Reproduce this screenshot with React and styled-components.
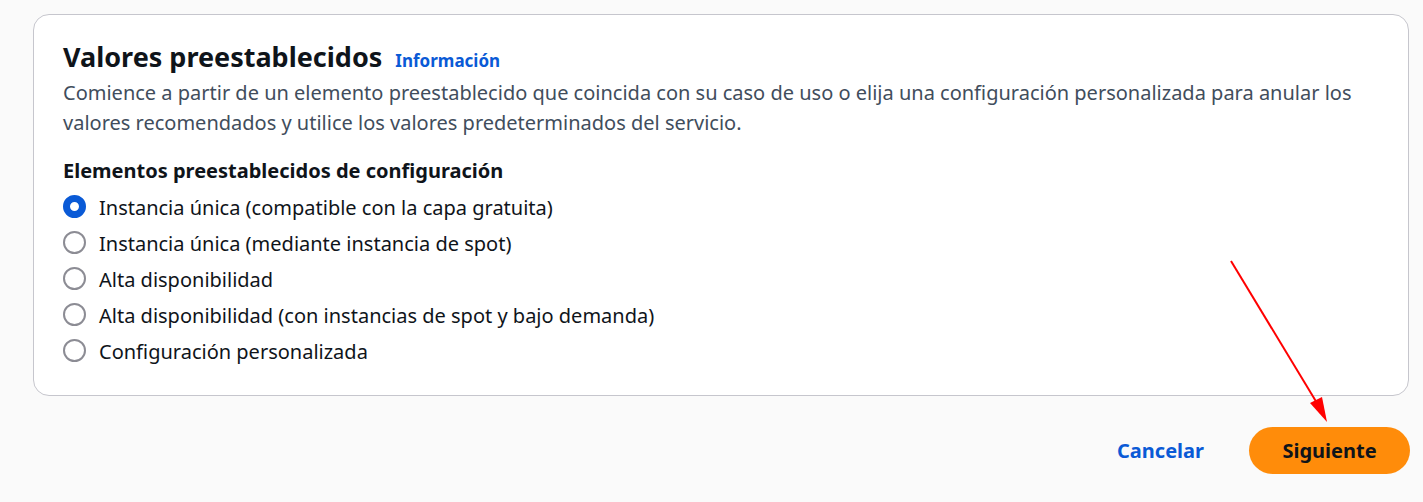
import React, { useState } from 'react';
import styled, { createGlobalStyle } from 'styled-components';

const GlobalStyle = createGlobalStyle`
  html, body {
    margin: 0;
    padding: 0;
    background: #fafafa;
  }
  body {
    font-family: 'Noto Sans', 'Open Sans', sans-serif;
    color: #0f141a;
  }
`;

const Page = styled.div`
  position: relative;
  padding: 14px 14px 0 33px;
  min-height: 502px;
  box-sizing: border-box;
`;

const Card = styled.section`
  background: #ffffff;
  border: 1px solid #c6c6cd;
  border-radius: 16px;
  padding: 24px 29px 30px;
  height: 382px;
  box-sizing: border-box;
`;

const TitleRow = styled.div`
  display: flex;
  align-items: baseline;
  gap: 13px;
`;

const Title = styled.h2`
  margin: 0;
  font-size: 27px;
  line-height: 36px;
  font-weight: 700;
  color: #0f141a;
`;

const InfoLink = styled.a`
  font-size: 17px;
  font-weight: 700;
  color: #0a5ad6;
  text-decoration: none;
`;

const Description = styled.p`
  margin: 3px 0 0;
  font-size: 20px;
  line-height: 30px;
  color: #414d5c;
  max-width: 1320px;
`;

const GroupLabel = styled.div`
  margin-top: 20px;
  font-size: 20px;
  line-height: 26px;
  font-weight: 700;
  color: #0f141a;
`;

const RadioList = styled.div`
  display: flex;
  flex-direction: column;
  margin-top: 5px;
`;

const RadioRow = styled.label`
  display: flex;
  align-items: center;
  gap: 13px;
  height: 36px;
  font-size: 20px;
  color: #0f141a;
  cursor: pointer;
`;

const RadioDot = styled.span`
  width: 23px;
  height: 23px;
  margin-top: -1px;
  border-radius: 50%;
  box-sizing: border-box;
  flex: none;
  border: ${p => (p.checked ? '7px solid #0a5ad6' : '2px solid #8c8c94')};
  background: #ffffff;
`;

const Footer = styled.div`
  display: flex;
  justify-content: flex-end;
  align-items: center;
  gap: 45px;
  margin-top: 31px;
`;

const LinkButton = styled.button`
  background: none;
  border: none;
  padding: 0;
  font-family: inherit;
  font-size: 20px;
  font-weight: 700;
  color: #0a5ad6;
  cursor: pointer;
`;

const PrimaryButton = styled.button`
  background: #ff8c0a;
  border: none;
  border-radius: 24px;
  height: 47px;
  width: 161px;
  margin-right: -1px;
  font-family: inherit;
  font-size: 20px;
  font-weight: 700;
  color: #0f141a;
  cursor: pointer;
`;

const Annotation = styled.svg`
  position: absolute;
  left: 0;
  top: 0;
  pointer-events: none;
`;

const options = [
  'Instancia única (compatible con la capa gratuita)',
  'Instancia única (mediante instancia de spot)',
  'Alta disponibilidad',
  'Alta disponibilidad (con instancias de spot y bajo demanda)',
  'Configuración personalizada',
];

export default function App() {
  const [selected, setSelected] = useState(0);

  return (
    <Page>
      <GlobalStyle />
      <Card>
        <TitleRow>
          <Title>Valores preestablecidos</Title>
          <InfoLink href="#">Información</InfoLink>
        </TitleRow>
        <Description>
          Comience a partir de un elemento preestablecido que coincida con su caso de uso o elija una configuración personalizada para anular los valores recomendados y utilice los valores predeterminados del servicio.
        </Description>
        <GroupLabel>Elementos preestablecidos de configuración</GroupLabel>
        <RadioList>
          {options.map((opt, i) => (
            <RadioRow key={opt} onClick={() => setSelected(i)}>
              <RadioDot checked={selected === i} />
              {opt}
            </RadioRow>
          ))}
        </RadioList>
      </Card>
      <Footer>
        <LinkButton>Cancelar</LinkButton>
        <PrimaryButton>Siguiente</PrimaryButton>
      </Footer>
      <Annotation width="1423" height="502" viewBox="0 0 1423 502">
        <line x1="1231" y1="261" x2="1320" y2="408" stroke="#f00" strokeWidth="2" />
        <polygon points="1327,422 1310,403 1322,397" fill="#f00" />
      </Annotation>
    </Page>
  );
}
